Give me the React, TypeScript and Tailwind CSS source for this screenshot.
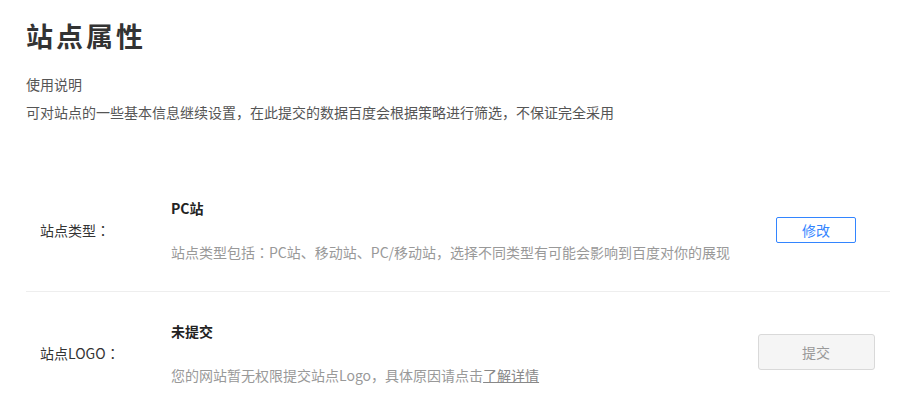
import React from "react";

const font = { fontFamily: '"Noto Sans CJK SC", "Noto Sans", sans-serif' };

function Colon() {
  return (
    <span style={{ fontFamily: '"Noto Sans CJK TC", "Noto Sans CJK SC", sans-serif' }}>：</span>
  );
}

function Row({
  label,
  title,
  desc,
  action,
  border,
}: {
  label: React.ReactNode;
  title: string;
  desc: React.ReactNode;
  action: React.ReactNode;
  border?: boolean;
}) {
  return (
    <div
      className={
        "flex items-center py-[28px] " +
        (border ? "border-b border-[#eeeeee]" : "")
      }
    >
      <div className="w-[145px] shrink-0 pl-[14px] text-[14px] leading-[22px] text-[#333333]">
        {label}
      </div>
      <div className="flex flex-1 flex-col gap-[22px]">
        <div className="text-[14px] font-bold leading-[22px] text-[#222222]">
          {title}
        </div>
        <div className="text-[14px] leading-[22px] text-[#999999]">{desc}</div>
      </div>
      <div className="flex w-[148px] shrink-0 justify-center">{action}</div>
    </div>
  );
}

export default function App() {
  return (
    <div
      className="min-h-[411px] w-[918px] bg-white px-[26px] pt-[18px]"
      style={font}
    >
      <h1 className="h-[36px] text-[27px] font-bold leading-[36px] tracking-[3px] text-[#333333]">
        站点属性
      </h1>
      <div className="mt-[16px] text-[14px] leading-[28px] text-[#555555]">
        使用说明
      </div>
      <div className="text-[14px] leading-[28px] text-[#555555]">
        可对站点的一些基本信息继续设置，在此提交的数据百度会根据策略进行筛选，不保证完全采用
      </div>
      <div className="mt-[43px] w-[864px]">
        <Row
          border
          label={
            <>
              站点类型
              <Colon />
            </>
          }
          title="PC站"
          desc={
            <>
              站点类型包括
              <Colon />
              PC站、移动站、PC/移动站，选择不同类型有可能会影响到百度对你的展现
            </>
          }
          action={
            <button className="h-[26px] w-[80px] rounded-[2px] border border-[#3385ff] bg-white text-[14px] leading-[24px] text-[#3385ff]">
              修改
            </button>
          }
        />
        <Row
          label={
            <>
              站点LOGO
              <Colon />
            </>
          }
          title="未提交"
          desc={
            <>
              您的网站暂无权限提交站点Logo，具体原因请点击
              <span className="text-[#888888] underline">了解详情</span>
            </>
          }
          action={
            <button className="-mt-[2px] h-[36px] w-[117px] rounded-[3px] border border-[#d9d9d9] bg-[#f5f5f5] text-[14px] leading-[34px] text-[#999999]">
              提交
            </button>
          }
        />
      </div>
    </div>
  );
}
